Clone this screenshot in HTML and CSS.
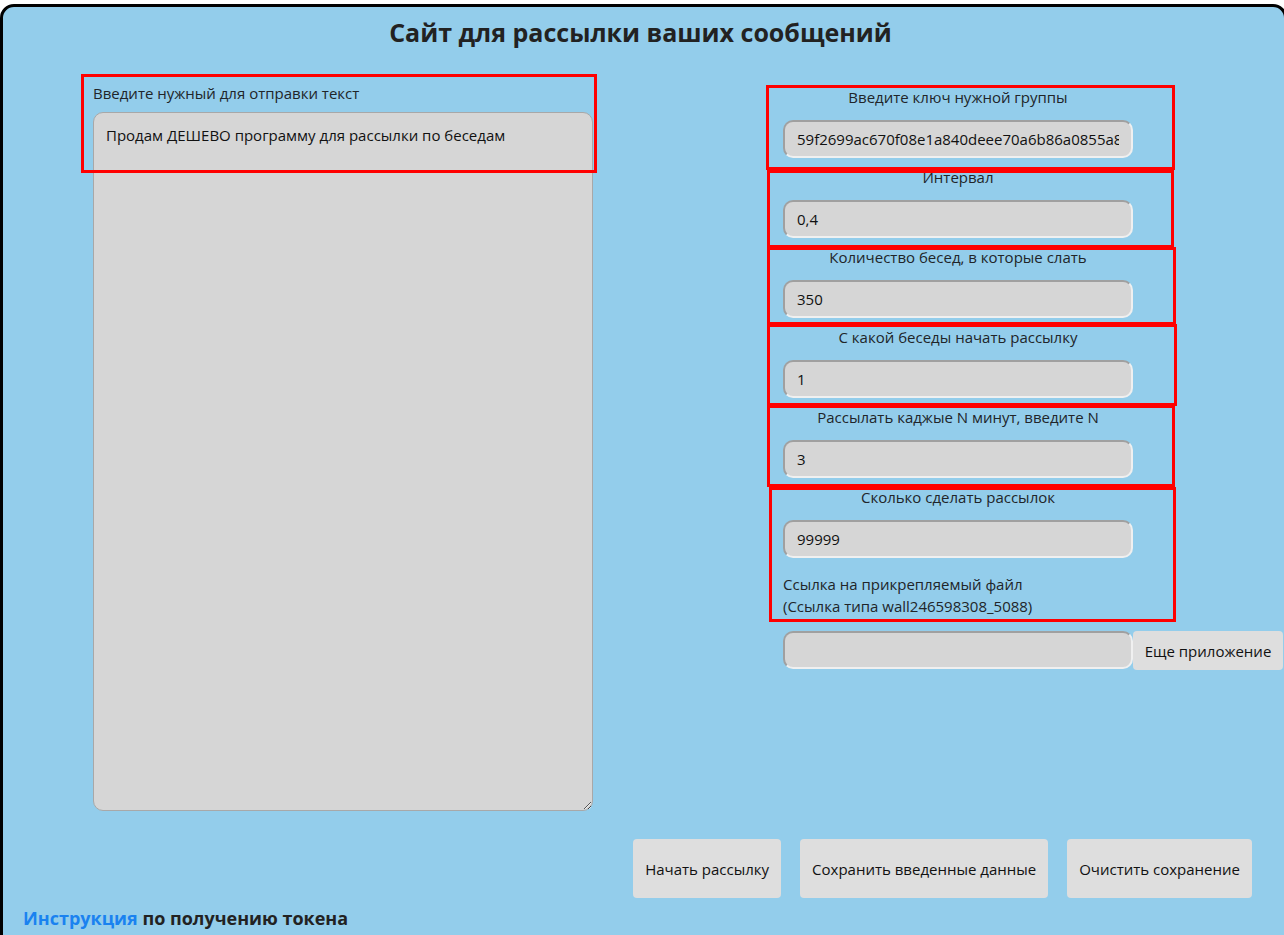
FILE: index.html
```html
<!DOCTYPE html>
<html lang="ru">
<head>
<meta charset="utf-8">
<title>Рассылка</title>
<link rel="stylesheet" href="styles.css">
</head>
<body>
<div class="page">
  <h1 class="title">Сайт для рассылки ваших сообщений</h1>
  <div class="main">
    <div class="left">
      <label class="lbl-left" for="msg">Введите нужный для отправки текст</label>
      <textarea id="msg" class="msg">Продам ДЕШЕВО программу для рассылки по беседам</textarea>
    </div>
    <div class="right">
      <div class="field">
        <div class="flabel">Введите ключ нужной группы</div>
        <input class="inp" type="text" value="59f2699ac670f08e1a840deee70a6b86a0855a88a1b2c3">
      </div>
      <div class="field">
        <div class="flabel">Интервал</div>
        <input class="inp" type="text" value="0,4">
      </div>
      <div class="field">
        <div class="flabel">Количество бесед, в которые слать</div>
        <input class="inp" type="text" value="350">
      </div>
      <div class="field">
        <div class="flabel">С какой беседы начать рассылку</div>
        <input class="inp" type="text" value="1">
      </div>
      <div class="field">
        <div class="flabel">Рассылать каджые N минут, введите N</div>
        <input class="inp" type="text" value="3">
      </div>
      <div class="field">
        <div class="flabel">Сколько сделать рассылок</div>
        <input class="inp" type="text" value="99999">
      </div>
      <div class="note">Ссылка на прикрепляемый файл<br>(Ссылка типа wall246598308_5088)</div>
      <div class="attach">
        <input class="inp" type="text" value="">
        <button class="btn btn-more" type="button">Еще приложение</button>
      </div>
    </div>
  </div>
  <div class="actions">
    <button class="btn btn-big" type="button">Начать рассылку</button>
    <button class="btn btn-big" type="button">Сохранить введенные данные</button>
    <button class="btn btn-big" type="button">Очистить сохранение</button>
  </div>
  <p class="footer"><a class="link" href="#">Инструкция</a> по получению токена</p>

  <div class="mark m1"></div>
  <div class="mark m2"></div>
  <div class="mark m3"></div>
  <div class="mark m4"></div>
  <div class="mark m5"></div>
  <div class="mark m6"></div>
  <div class="mark m7"></div>
</div>
</body>
</html>
```

FILE: styles.css
```css
html, body {
  margin: 0;
  padding: 0;
  overflow: hidden;
  background: #ffffff;
}

body {
  font-family: "Open Sans", "Noto Sans", sans-serif;
  color: #212529;
  font-size: 14px;
}

.page {
  position: relative;
  box-sizing: border-box;
  width: 1287px;
  height: 1000px;
  margin-top: 4px;
  border: 3px solid #000;
  border-radius: 14px;
  background: #93cdeb;
}

.title {
  margin: 0;
  padding-top: 7px;
  height: 43px;
  line-height: 36px;
  text-align: center;
  font-size: 25px;
  font-weight: 700;
  color: #222;
  padding-right: 6px;
}

.main {
  display: flex;
  padding-left: 90px;
}

.left {
  width: 500px;
  display: flex;
  flex-direction: column;
  padding-top: 25px;
}

.lbl-left {
  line-height: 22px;
  font-size: 15px;
  margin-bottom: 8px;
}

.msg {
  box-sizing: border-box;
  width: 500px;
  height: 699px;
  margin: 0;
  padding: 11px 12px;
  border: 1px solid #a8a8a8;
  border-radius: 10px;
  background: #d6d6d6;
  font-family: inherit;
  font-size: 15px;
  line-height: 22px;
  color: #111;
  resize: both;
}

.right {
  margin-left: 190px;
  padding-top: 29px;
  width: 350px;
  display: flex;
  flex-direction: column;
}

.field {
  display: flex;
  flex-direction: column;
  padding-bottom: 8px;
}

.flabel {
  text-align: center;
  line-height: 22px;
  font-size: 15px;
  margin-bottom: 12px;
}

.inp {
  flex: none;
  box-sizing: border-box;
  width: 350px;
  height: 38px;
  margin: 0;
  padding: 0 12px;
  border: 2px solid;
  border-color: #a0a0a0 #f0f0f0 #f0f0f0 #a0a0a0;
  border-radius: 10px;
  background: #d6d6d6;
  font-family: inherit;
  font-size: 15px;
  color: #111;
  outline: none;
}

.note {
  margin-top: 7px;
  line-height: 22px;
  font-size: 15px;
}

.attach {
  display: flex;
  margin-top: 14px;
}

.btn {
  border: none;
  background: #dedede;
  border-radius: 4px;
  font-family: inherit;
  font-size: 15px;
  color: #111;
  cursor: pointer;
}

.btn-more {
  flex: none;
  width: 150px;
  height: 39px;
  padding: 0;
}

.actions {
  display: flex;
  justify-content: flex-end;
  gap: 19px;
  padding-right: 32px;
  margin-top: 28px;
}

.btn-big {
  height: 59px;
  padding: 0 12px;
}

.footer {
  margin: 8px 0 0 20px;
  font-size: 18px;
  font-weight: 700;
  color: #222;
}

.link {
  color: #1a82f0;
  text-decoration: none;
}

.mark {
  position: absolute;
  box-sizing: border-box;
  border: 3px solid #ff0000;
  pointer-events: none;
}

.m1 { left: 78px;  top: 67px;  width: 516px; height: 99px; }
.m2 { left: 763px; top: 78px;  width: 409px; height: 85px; }
.m3 { left: 764px; top: 163px; width: 407px; height: 78px; }
.m4 { left: 764px; top: 240px; width: 409px; height: 78px; }
.m5 { left: 764px; top: 317px; width: 410px; height: 82px; }
.m6 { left: 764px; top: 398px; width: 408px; height: 82px; }
.m7 { left: 766px; top: 480px; width: 407px; height: 135px; }
```
